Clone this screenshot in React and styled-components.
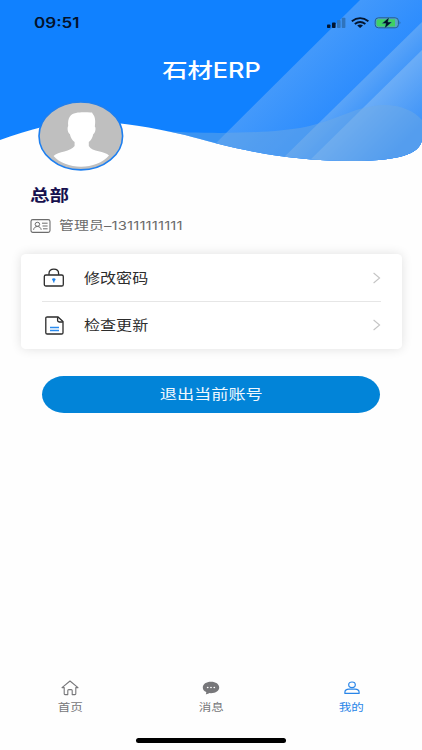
import React from 'react';
import styled, { createGlobalStyle } from 'styled-components';

const GlobalStyle = createGlobalStyle`
  * {
    box-sizing: border-box;
  }

  body {
    margin: 0;
    background: #fefefe;
    font-family: Inter, 'Noto Sans CJK SC', sans-serif;
  }
`;

const Screen = styled.div`
  width: 422px;
  height: 750px;
  display: flex;
  flex-direction: column;
  overflow: hidden;
  background: #fefefe;
`;

const Header = styled.header`
  position: relative;
  isolation: isolate;
  height: 165px;
  flex: none;
`;

const Backdrop = styled.svg`
  position: absolute;
  top: 0;
  left: 0;
  z-index: -1;
`;

const StatusBar = styled.div`
  display: flex;
  justify-content: space-between;
  align-items: center;
  height: 45px;
  padding: 0 21px 0 34px;
`;

// wide text, stretched around its own start or centre
const Text = styled.span`
  display: inline-block;
  white-space: nowrap;
  font-size: ${props => props.$size}px;
  line-height: ${props => props.$line || 20}px;
  font-weight: ${props => props.$weight || 400};
  letter-spacing: ${props => props.$spacing || 0}px;
  color: ${props => props.$color || 'inherit'};
  transform: scaleX(1.218);
  transform-origin: ${props => (props.$center ? 'center' : 'left')};
`;

const Title = styled.h1`
  display: flex;
  justify-content: center;
  margin: 11px 0 0;
  height: 30px;
`;

const Profile = styled.section`
  display: flex;
  flex-direction: column;
  align-items: flex-start;
  height: 153px;
  margin-top: -64px;
  padding-left: 30px;
  position: relative;
  flex: none;
`;

const Avatar = styled.svg`
  margin-left: 8px;
`;

const Name = styled.div`
  display: flex;
  height: 24px;
  margin-top: 11px;
`;

const Account = styled.div`
  display: flex;
  align-items: center;
  gap: 8px;
  height: 20px;
  margin-top: 8.5px;
`;

const Card = styled.ul`
  list-style: none;
  width: 381px;
  height: 95px;
  margin: 0 0 0 21px;
  padding: 0 21px;
  flex: none;
  border-radius: 5px / 4px;
  background: #fff;
  box-shadow: 0 0 11px rgba(0, 0, 0, 0.12);
`;

const Row = styled.li`
  display: flex;
  align-items: center;
  height: 47px;

  & + & {
    border-top: 1px solid #e6e6e6;
  }
`;

const RowIcon = styled.span`
  display: flex;
  width: 41.5px;
`;

const RowLabel = styled.span`
  display: flex;
  flex: 1;
`;

const LogoutButton = styled.button`
  display: flex;
  justify-content: center;
  align-items: center;
  width: 338px;
  height: 36.5px;
  margin: 27px 0 0 42px;
  padding: 0;
  flex: none;
  border: 0;
  border-radius: 22px / 18.5px;
  background: #0284d8;
  color: #eff8fe;
  font-family: inherit;
`;

const TabBar = styled.nav`
  display: grid;
  grid-template-columns: repeat(3, 1fr);
  height: 58px;
  margin-top: auto;
`;

const Tab = styled.div`
  display: flex;
  flex-direction: column;
  align-items: center;
  gap: 3px;
  color: ${props => (props.$active ? '#2985e8' : '#77777a')};
`;

const HomeIndicator = styled.div`
  width: 150px;
  height: 5px;
  margin: 0 auto 7px;
  border-radius: 3px;
  background: #000;
`;

const wave =
  'M0 0H422V139C421 151 407 161 352 161C276 161 222 145 185 135C150 127 123 123 96 121C62 120 30 129 0 140Z';

function HeaderBackdrop() {
  return (
    <Backdrop width="422" height="165" viewBox="0 0 422 165">
      <defs>
        <clipPath id="wave">
          <path d={wave} />
        </clipPath>
        <linearGradient id="band1" gradientUnits="userSpaceOnUse" x1="289" y1="71" x2="338" y2="120">
          <stop offset="0" stopColor="#4399fb" />
          <stop offset="1" stopColor="#2a8bfe" />
        </linearGradient>
        <linearGradient id="band2" gradientUnits="userSpaceOnUse" x1="342" y1="100" x2="362" y2="120">
          <stop offset="0" stopColor="#5aa4f8" />
          <stop offset="1" stopColor="#3d94fa" />
        </linearGradient>
        <linearGradient id="band3" gradientUnits="userSpaceOnUse" x1="372" y1="100" x2="410" y2="138">
          <stop offset="0" stopColor="#6badf7" />
          <stop offset="1" stopColor="#3c92f8" />
        </linearGradient>
      </defs>
      <g clipPath="url(#wave)">
        <path d="M0 0H422V165H0Z" fill="#1081ff" />
        <path d="M360 0H422V165H194Z" fill="url(#band1)" />
        <path d="M422 22V165H276Z" fill="url(#band2)" />
        <path d="M422 50V165H305Z" fill="url(#band3)" />
        <path
          d="M160 131C205 134 270 134 305 127C335 121 355 106 384 105C401 105 414 111 422 120V165H160Z"
          fill="#72aae2"
          opacity="0.45"
        />
      </g>
    </Backdrop>
  );
}

function StatusIcons() {
  return (
    <svg width="76" height="14" viewBox="0 0 76 14">
      <rect x="2" y="8.5" width="3.4" height="3.5" rx="0.8" fill="#03152f" />
      <rect x="7" y="6.5" width="3.6" height="5.5" rx="0.8" fill="#03152f" />
      <rect x="12" y="4" width="3.6" height="8" rx="0.8" fill="#2f74bd" />
      <rect x="16.8" y="1.8" width="3.6" height="10.2" rx="0.8" fill="#2f74bd" />
      <g fill="none" stroke="#03152f" strokeWidth="1.9">
        <path d="M26.8 5.2Q35.1 -1 43.4 5.2" />
        <path d="M29.8 8Q35.1 4 40.4 8" />
      </g>
      <path d="M32.2 9.5Q35.1 7.6 38 9.5L35.1 12Z" fill="#03152f" />
      <rect x="50.2" y="1.8" width="23.2" height="10" rx="3.2" fill="#5aa4c8" stroke="#245f91" />
      <path d="M53.5 3.2H70V10.4H53.5Q51.5 10.4 51.5 8.4V5.2Q51.5 3.2 53.5 3.2Z" fill="#3fd163" />
      <path d="M74.6 5.2Q76.2 6.8 74.6 8.4Z" fill="#245f91" />
      <path d="M64.2 1.2L56.8 7.6H60.9L59.5 12.6L67 6.1H62.9Z" fill="#021226" stroke="#43aab0" strokeWidth="0.4" />
    </svg>
  );
}

function AvatarPicture() {
  return (
    <Avatar width="86" height="71" viewBox="0 0 86 71">
      <ellipse cx="42.8" cy="34.9" rx="41.8" ry="34" fill="#bfbfbf" stroke="#1d7ff0" strokeWidth="1.6" />
      <path
        d="M30.2 25C29.6 17 32 13 38 12C43 10.8 50 11.6 54 11.4L54.8 13C57.5 16 57.5 21 56.8 25.5C58.2 26.5 57.5 32 55.3 33C54.5 37 52.8 39.5 50.8 41V45C54 51 67 50 71 54.5C65 61.5 54 65.8 43 65.8C32 65.8 21 61.5 15.5 55C20 50.5 33 50.5 36.6 45V41C34.5 39.5 32.7 37 31.8 33C29.7 32 29 26.5 30.2 25Z"
        fill="#fff"
      />
    </Avatar>
  );
}

function IdCardIcon() {
  return (
    <svg width="21" height="14" viewBox="0 0 21 14" fill="none" stroke="#6c6c6c">
      <rect x="1" y="0.6" width="19" height="12.8" rx="1.8" strokeWidth="1.1" />
      <ellipse cx="7.4" cy="5.3" rx="2.3" ry="2" />
      <path d="M3.6 10.8C3.9 8.6 5.4 7.5 7.4 7.5S10.9 8.6 11.2 10.8M12 4.2H17.6M12.5 7H17.6M13 9.8H17.6" />
    </svg>
  );
}

function LockIcon() {
  return (
    <svg width="22" height="19" viewBox="0 0 22 19" fill="none" stroke="#2b2b2b" strokeWidth="1.3">
      <rect x="2.3" y="7" width="19" height="11" rx="1.6" />
      <path d="M7 6.8V5.4C7 2.8 8.9 1.2 11.8 1.2S16.6 2.8 16.6 5.4V6.8" />
      <ellipse cx="11.8" cy="11.6" rx="1.7" ry="1.4" fill="#1e82ea" stroke="none" />
      <path d="M11.8 12V14.6" stroke="#1e82ea" />
    </svg>
  );
}

function FileIcon() {
  return (
    <svg width="22" height="19" viewBox="0 0 22 19" fill="none" stroke="#2b2b2b" strokeWidth="1.3">
      <path d="M5.2 1H16L21 5.6V16.8Q21 18 19.6 18H5.2Q3.8 18 3.8 16.8V2.2Q3.8 1 5.2 1Z" />
      <path d="M15.6 1.2V4.6Q15.6 6 17.2 6H20.8" />
      <path d="M8 11.5H17M8 14.5H17" stroke="#2b8bee" />
    </svg>
  );
}

function Chevron() {
  return (
    <svg width="8" height="12" viewBox="0 0 8 12" fill="none" stroke="#c4c4c4" strokeWidth="1.1">
      <path d="M0.6 1L6.6 6L0.6 11" />
    </svg>
  );
}

function HomeIcon() {
  return (
    <svg width="18" height="16" viewBox="0 0 18 16" fill="none" stroke="currentColor" strokeWidth="1.1" strokeLinejoin="round">
      <path d="M3.2 7.6H1L9 1L17 7.6H14.8V13.8Q14.8 14.6 14 14.6H11.2V10.6Q11.2 9.6 10.2 9.6H7.8Q6.8 9.6 6.8 10.6V14.6H4Q3.2 14.6 3.2 13.8Z" />
    </svg>
  );
}

function MessageIcon() {
  return (
    <svg width="18" height="16" viewBox="0 0 18 16">
      <path d="M9 1.8C13.8 1.8 17.2 4.1 17.2 7.5S13.8 13.2 9 13.2L7.6 13.1Q5.8 14.4 3.8 14.2Q4.5 13.2 4.2 12.1C2 11.2 .8 9.6 .8 7.5C.8 4.1 4.2 1.8 9 1.8Z" fill="currentColor" />
      <g fill="#fff">
        <ellipse cx="5.7" cy="7.4" rx="0.9" ry="0.75" />
        <ellipse cx="9" cy="7.4" rx="0.9" ry="0.75" />
        <ellipse cx="12.3" cy="7.4" rx="0.9" ry="0.75" />
      </g>
    </svg>
  );
}

function UserIcon() {
  return (
    <svg width="18" height="16" viewBox="0 0 18 16" fill="none" stroke="currentColor" strokeWidth="1.2">
      <ellipse cx="9" cy="4.8" rx="3.3" ry="2.8" />
      <path d="M1.9 13.4V12.2C1.9 10.3 3.8 9.1 6 9.1H12C14.2 9.1 16.1 10.3 16.1 12.2V13.4Z" strokeLinejoin="round" />
    </svg>
  );
}

const menu = [
  { label: '修改密码', Icon: LockIcon },
  { label: '检查更新', Icon: FileIcon },
];

const tabs = [
  { label: '首页', Icon: HomeIcon },
  { label: '消息', Icon: MessageIcon },
  { label: '我的', Icon: UserIcon, active: true },
];

function App() {
  return (
    <Screen>
      <GlobalStyle />
      <Header>
        <HeaderBackdrop />
        <StatusBar>
          <Text $size={14} $weight={600} $color="#03122b">09:51</Text>
          <StatusIcons />
        </StatusBar>
        <Title>
          <Text $size={20.8} $line={30} $weight={500} $color="#fff" $center>石材ERP</Text>
        </Title>
      </Header>
      <Profile>
        <AvatarPicture />
        <Name>
          <Text $size={16} $line={24} $weight={700} $color="#17104f">总部</Text>
        </Name>
        <Account>
          <IdCardIcon />
          <Text $size={12.2} $spacing={0.12} $color="#6a6a6a">管理员–13111111111</Text>
        </Account>
      </Profile>
      <Card>
        {menu.map(({ label, Icon }) => (
          <Row key={label}>
            <RowIcon><Icon /></RowIcon>
            <RowLabel>
              <Text $size={13.2} $color="#2c2c2c">{label}</Text>
            </RowLabel>
            <Chevron />
          </Row>
        ))}
      </Card>
      <LogoutButton>
        <Text $size={14.1} $center>退出当前账号</Text>
      </LogoutButton>
      <TabBar>
        {tabs.map(({ label, Icon, active }) => (
          <Tab key={label} $active={active}>
            <Icon />
            <Text $size={10.3} $line={16} $center>{label}</Text>
          </Tab>
        ))}
      </TabBar>
      <HomeIndicator />
    </Screen>
  );
}

export default App;
